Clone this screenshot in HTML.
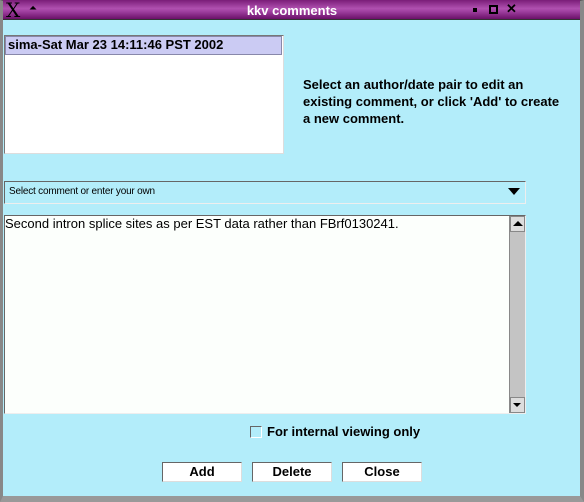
<!DOCTYPE html><html><head><style>
*{margin:0;padding:0;box-sizing:border-box}
body{width:584px;height:502px;overflow:hidden;background:#b3edfa;position:relative;font-family:"Liberation Sans",sans-serif}
.a{position:absolute}
</style></head><body>
<div class="a" style="left:0;top:0;width:584px;height:502px;border:1px solid #555;border-left:3px solid #888;border-right:4px solid #888;border-bottom:6px solid #999"></div>
<div class="a" style="left:3px;top:0;width:577px;height:20px;background:linear-gradient(#7a1d78,#b050b0 45%,#a040a0 60%,#6a1068);border-bottom:1px solid #333"></div>
<div class="a" style="left:6px;top:0;font-size:20px;color:#000;font-family:'DejaVu Serif',serif;line-height:20px">X</div>
<div class="a" style="left:29px;top:3px;font-size:10px;color:#000">&#9206;</div>
<div class="a" style="left:0;top:3px;width:584px;text-align:center;color:#fff;font-weight:bold;font-size:13px">kkv comments</div>
<div class="a" style="left:473px;top:8px;width:4px;height:4px;background:#000"></div>
<div class="a" style="left:489px;top:5px;width:9px;height:9px;border:2px solid #000"></div>
<div class="a" style="left:506px;top:1px;font-size:13px;font-weight:bold">✕</div>
<div class="a" style="left:4px;top:35px;width:280px;height:119px;background:#fff;border:1px solid #777;border-right-color:#ddd;border-bottom-color:#ddd"></div>
<div class="a" style="left:5px;top:36px;width:277px;height:19px;background:#cbcbf3;border:1px solid #8888aa;font-size:13px;font-weight:bold;padding:0 0 0 2px">sima-Sat Mar 23 14:11:46 PST 2002</div>
<div class="a" style="left:303px;top:76px;font-size:13px;font-weight:bold;line-height:17px">Select an author/date pair to edit an<br>existing comment, or click 'Add' to create<br>a new comment.</div>
<div class="a" style="left:4px;top:181px;width:522px;height:23px;border:1px solid #666;border-right-color:#eee;border-bottom-color:#eee;font-size:10px;letter-spacing:-0.2px;padding:4px 0 0 4px">Select comment or enter your own</div>
<div class="a" style="left:508px;top:188px;width:0;height:0;border-left:6px solid transparent;border-right:6px solid transparent;border-top:7px solid #000"></div>
<div class="a" style="left:4px;top:215px;width:522px;height:199px;background:#fcfffc;border:1px solid #666;border-right-color:#eee;border-bottom-color:#eee;font-size:13px;padding:0">Second intron splice sites as per EST data rather than FBrf0130241.</div>
<div class="a" style="left:509px;top:216px;width:16px;height:197px;background:#c4c4c4;border-left:1px solid #888"></div>
<div class="a" style="left:510px;top:216px;width:15px;height:16px;background:#ddd;border:1px solid #888"></div>
<div class="a" style="left:513px;top:221px;border-left:5px solid transparent;border-right:5px solid transparent;border-bottom:5px solid #000"></div>
<div class="a" style="left:510px;top:397px;width:15px;height:16px;background:#ddd;border:1px solid #888"></div>
<div class="a" style="left:513px;top:403px;border-left:4px solid transparent;border-right:4px solid transparent;border-top:4px solid #000"></div>
<div class="a" style="left:250px;top:426px;width:12px;height:12px;border:1px solid #666;border-right-color:#fff;border-bottom-color:#fff"></div>
<div class="a" style="left:267px;top:424px;font-size:13px;font-weight:bold">For internal viewing only</div>
<div class="a" style="left:162px;top:462px;width:80px;height:20px;background:#fff;border:1px solid #666;border-right-color:#ddd;border-bottom-color:#ddd;font-size:13px;font-weight:bold;text-align:center;line-height:18px">Add</div>
<div class="a" style="left:252px;top:462px;width:80px;height:20px;background:#fff;border:1px solid #666;border-right-color:#ddd;border-bottom-color:#ddd;font-size:13px;font-weight:bold;text-align:center;line-height:18px">Delete</div>
<div class="a" style="left:342px;top:462px;width:80px;height:20px;background:#fff;border:1px solid #666;border-right-color:#ddd;border-bottom-color:#ddd;font-size:13px;font-weight:bold;text-align:center;line-height:18px">Close</div>
</body></html>
